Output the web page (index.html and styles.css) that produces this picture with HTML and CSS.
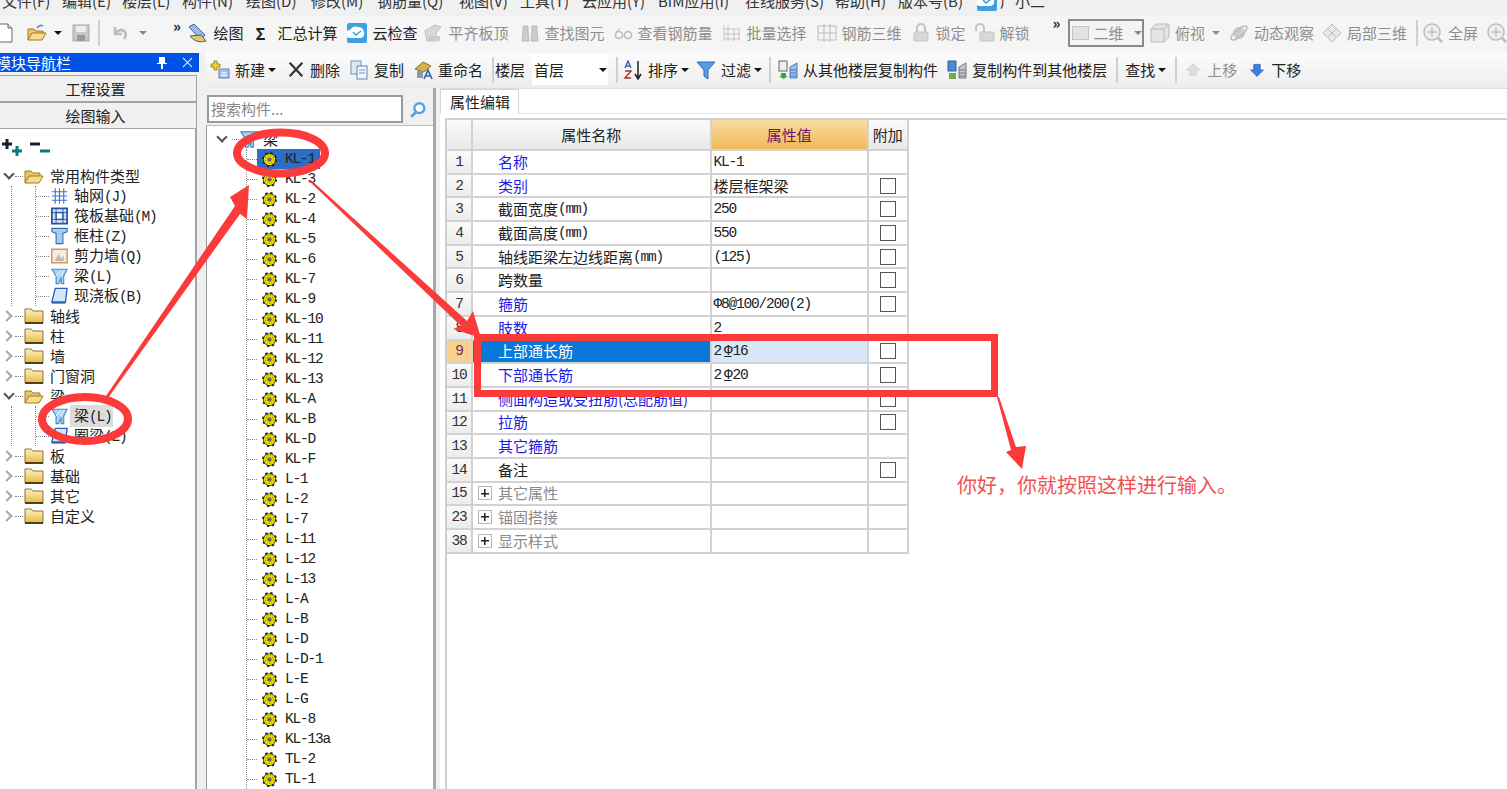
FILE: index.html
```html
<!DOCTYPE html>
<html lang="zh-CN">
<head>
    <meta charset="UTF-8">
    <meta name="viewport" content="width=device-width, initial-scale=1.0">
    <title>属性编辑</title>
    <link rel="stylesheet" href="styles.css">
</head>
<body>
    <svg class="defs" width="0" height="0">
        <linearGradient id="g-folder" x1="0" y1="0" x2="0" y2="1"><stop offset="0" stop-color="#fdf3c4"/><stop offset="1" stop-color="#eab93e"/></linearGradient>
        <symbol id="i-doc" viewBox="0 0 20 20"><path d="M3 1h10l4 4v14H3z" fill="#fff" stroke="#667"/><path d="M13 1v4h4" fill="#dde" stroke="#667"/></symbol>
        <symbol id="i-open" viewBox="0 0 20 20"><path d="M1 17V5h6l2 2h7v4H6z" fill="#e8c46a" stroke="#a07a20"/><path d="M1 17l4-7h14l-4 7z" fill="#f6dc8c" stroke="#a07a20"/></symbol>
        <symbol id="i-open-arrow" viewBox="0 0 20 20"><path d="M1 17V6h6l2 2h7v3H6z" fill="#e8c46a" stroke="#a07a20"/><path d="M1 17l4-7h14l-4 7z" fill="#f6dc8c" stroke="#a07a20"/><path d="M10 5q3-4 6-2" fill="none" stroke="#5a8fd0" stroke-width="1.6"/></symbol>
        <symbol id="i-save" viewBox="0 0 20 20"><rect x="2" y="2" width="16" height="16" fill="#c8c8c8" stroke="#aaa"/><rect x="5" y="3" width="10" height="6" fill="#eee"/><rect x="6" y="12" width="8" height="6" fill="#999"/></symbol>
        <symbol id="i-undo" viewBox="0 0 20 20"><path d="M5 4v7h7M5 11q5-7 10-2 2 3-1 7" fill="none" stroke="#bbb" stroke-width="2.6"/></symbol>
        <symbol id="i-draw" viewBox="0 0 20 20"><path d="M1 4l5-3 11 11-4 5z" fill="#9db9e4" stroke="#3a5f9a"/><path d="M2 13q6 8 16 5l-5-6z" fill="#e8c75c" stroke="#3a5f9a"/></symbol>
        <symbol id="i-cloud" viewBox="0 0 20 20"><rect x="0" y="0" width="20" height="20" rx="2" fill="#3da0e0"/><path d="M3 15a4 4 0 0 1 0-8q3-5 8-3 5 0 6 5 1 5-3 6z" fill="#fff"/><path d="M6 9l3 3 5-4" fill="none" stroke="#3da0e0" stroke-width="1.6"/></symbol>
        <symbol id="i-align" viewBox="0 0 20 20"><path d="M1 8l10-6 6 2-5 6v8H3z" fill="#d8d8d8" stroke="#bbb"/><path d="M4 13h12v5H4z" fill="#ccc"/></symbol>
        <symbol id="i-binoc" viewBox="0 0 20 20"><path d="M3 3h5v5l1 10H2l1-10zM12 3h5v5l1 10h-7l1-10z" fill="#ccc" stroke="#bbb"/></symbol>
        <symbol id="i-glass" viewBox="0 0 20 20"><circle cx="6" cy="12" r="3.5" fill="none" stroke="#bbb" stroke-width="1.6"/><circle cx="15" cy="12" r="3.5" fill="none" stroke="#bbb" stroke-width="1.6"/><path d="M3 9l4-4" stroke="#bbb"/></symbol>
        <symbol id="i-batch" viewBox="0 0 20 20"><path d="M2 2v16M6 2v16M2 6h16M2 11h16M2 16h16M12 6v12M17 6v12" stroke="#c4c4c4" fill="none"/></symbol>
        <symbol id="i-grid3d" viewBox="0 0 20 20"><path d="M1 3h18v14H1zM7 1v18M13 1v18M1 10h18" stroke="#bbb" fill="none"/></symbol>
        <symbol id="i-lock" viewBox="0 0 20 20"><path d="M6 9V5a4 4 0 0 1 8 0v4" fill="none" stroke="#c4c4c4" stroke-width="2"/><rect x="3" y="9" width="14" height="9" rx="1" fill="#d8d8d8" stroke="#c4c4c4"/></symbol>
        <symbol id="i-unlock" viewBox="0 0 20 20"><path d="M1 8V5a4 4 0 0 1 8 0v4" fill="none" stroke="#c4c4c4" stroke-width="2"/><rect x="5" y="9" width="14" height="9" rx="1" fill="#d8d8d8" stroke="#c4c4c4"/></symbol>
        <symbol id="i-cube" viewBox="0 0 20 20"><path d="M1 6l5-5h13v13l-5 5H1z" fill="#e4e4e4" stroke="#bbb"/><path d="M1 6h13v13M14 6l5-5" fill="none" stroke="#bbb"/></symbol>
        <symbol id="i-orbit" viewBox="0 0 20 20"><circle cx="10" cy="10" r="6" fill="#ccc"/><ellipse cx="10" cy="10" rx="10" ry="3.5" transform="rotate(-40 10 10)" fill="none" stroke="#bbb" stroke-width="1.5"/></symbol>
        <symbol id="i-part" viewBox="0 0 20 20"><path d="M10 1l9 9-9 9-9-9z" fill="#e8e8e8" stroke="#bbb"/><path d="M5 5l9 9M15 5l-9 9" stroke="#bbb"/></symbol>
        <symbol id="i-zoom" viewBox="0 0 20 20"><circle cx="9" cy="9" r="8" fill="#eee" stroke="#bbb" stroke-width="1.5"/><path d="M9 4v10M4 9h10" stroke="#aaa"/><path d="M15 15l4 4" stroke="#bbb" stroke-width="2.5"/></symbol>
        <symbol id="i-new" viewBox="0 0 20 20"><path d="M4 1h3v3h3v3H7v3H4V7H1V4h3z" fill="#f2d23c" stroke="#a08a20"/><rect x="9" y="9" width="10" height="9" fill="#a9c2e6" stroke="#5f82b6"/><path d="M11 13h6M11 15.500h6" stroke="#fff"/></symbol>
        <symbol id="i-del" viewBox="0 0 20 20"><path d="M3 2l14 15M17 2L3 17" stroke="#333" stroke-width="2.4"/></symbol>
        <symbol id="i-copy" viewBox="0 0 20 20"><rect x="2" y="1" width="10" height="13" fill="#dfe8f5" stroke="#6f8fbd"/><rect x="8" y="6" width="10" height="13" fill="#f4f8fd" stroke="#5f82b6"/><path d="M10 10h6M10 13h6" stroke="#6f8fbd"/></symbol>
        <symbol id="i-rename" viewBox="0 0 20 20"><path d="M2 9l8-7 8 4-7 6z" fill="#d8b24c" stroke="#8a7020"/><rect x="4" y="11" width="6" height="7" fill="#8a9aa8"/><path d="M11 19l4-9 4 9M12.500 16h5" fill="none" stroke="#2a62b8" stroke-width="1.6"/></symbol>
        <symbol id="i-az" viewBox="0 0 20 20"><path d="M2 8l3-7 3 7M3 6h4" fill="none" stroke="#2f62b5" stroke-width="1.4"/><path d="M2 11h6l-6 7h6" fill="none" stroke="#a83030" stroke-width="1.4"/><path d="M15 1v17M12 14l3 5 3-5" fill="none" stroke="#222" stroke-width="1.5"/></symbol>
        <symbol id="i-funnel" viewBox="0 0 20 20"><path d="M1 2h18l-7 8v9l-4-3v-6z" fill="#5b9be0" stroke="#2a6cb8"/></symbol>
        <symbol id="i-from" viewBox="0 0 20 20"><rect x="1" y="1" width="8" height="10" fill="#eee" stroke="#666"/><path d="M3 13h5v3h2l-4.500 3L1 16h2z" fill="#3ca04a"/><path d="M12 7l7-4v15h-7zM12 10h7M12 13h7M12 16h7" fill="#9fc0e6" stroke="#4f7db5"/></symbol>
        <symbol id="i-to" viewBox="0 0 20 20"><rect x="1" y="1" width="8" height="10" fill="#4f86d6" stroke="#2f5fa5"/><rect x="2" y="13" width="7" height="6" fill="#6cb04a"/><path d="M12 7l7-4v15h-7zM12 10h7M12 13h7M12 16h7" fill="#c4c8cc" stroke="#777"/></symbol>
        <symbol id="i-up" viewBox="0 0 20 20"><path d="M10 2l8 8h-4v7H6v-7H2z" fill="#ddd" stroke="#ccc"/></symbol>
        <symbol id="i-down" viewBox="0 0 20 20"><path d="M10 18l8-8h-4V3H6v7H2z" fill="#3f7fe0" stroke="#2a5fb0"/></symbol>
        <symbol id="i-search" viewBox="0 0 20 20"><circle cx="11.500" cy="8" r="5.500" fill="#fff" stroke="#4fa3e8" stroke-width="2.600"/><path d="M7.500 12.500L2.500 17.500" stroke="#4fa3e8" stroke-width="3.200"/></symbol>
        <symbol id="i-folder" viewBox="0 0 20 20"><path d="M1 17V3h6l2 2h10v12z" fill="url(#g-folder)" stroke="#8a7434"/><path d="M1 17h18" stroke="#4f421a" stroke-width="2"/></symbol>
        <symbol id="i-axis" viewBox="0 0 20 20"><path d="M1 5h18M1 10h18M1 15h18M5 1v18M10 1v18M15 1v18" stroke="#3f6fd0" stroke-width="1.300"/></symbol>
        <symbol id="i-raft" viewBox="0 0 20 20"><rect x="1" y="1" width="18" height="18" fill="#cfe0f5" stroke="#27559c" stroke-width="2"/><rect x="6" y="6" width="8" height="8" fill="#fff" stroke="#27559c" stroke-width="1.500"/><path d="M1 6h18M1 14h18M6 1v18M14 1v18" stroke="#27559c"/></symbol>
        <symbol id="i-col" viewBox="0 0 20 20"><path d="M1 1h18v4l-5 2v12H6V7L1 5z" fill="#a9cbee" stroke="#2f6fb5" stroke-width="1.300"/></symbol>
        <symbol id="i-wall" viewBox="0 0 20 20"><rect x="1" y="2" width="18" height="16" fill="#f6ead8" stroke="#c98a4a" stroke-width="1.500"/><path d="M5 14l4-6 3 5 3-3v6H5z" fill="#bbb"/></symbol>
        <symbol id="i-beam" viewBox="0 0 20 20"><path d="M1 2h18l-4 8v9h-3v-7l-3 7H6v-9z" fill="#a9d3f2" stroke="#3f8cd0" stroke-width="1.300"/><path d="M12 3l-6 7M16 3l-5 7" stroke="#fff"/></symbol>
        <symbol id="i-slab" viewBox="0 0 20 20"><path d="M5 1h14l-2 16H1z" fill="#d5e6f8" stroke="#2a62c0" stroke-width="1.600"/><path d="M1 17h16v2H1z" fill="#2a62c0"/></symbol>
        <symbol id="i-gear" viewBox="0 0 20 20"><circle cx="10" cy="10" r="8.500" fill="#222" stroke="#222" stroke-width="3" stroke-dasharray="3 3.680"/><circle cx="10" cy="10" r="7.500" fill="#f4e800"/><circle cx="10" cy="10" r="3" fill="#6a6a50"/><circle cx="10" cy="10" r="5.200" fill="none" stroke="#222" stroke-width="1" stroke-dasharray="1.500 2"/></symbol>
    </svg>

    <nav class="menubar">
        <div class="menu-inner">
            <span>文件(F)</span><span>编辑(E)</span><span>楼层(L)</span><span>构件(N)</span><span>绘图(D)</span><span>修改(M)</span><span>钢筋量(Q)</span><span>视图(V)</span><span>工具(T)</span><span>云应用(Y)</span><span>BIM应用(I)</span><span>在线服务(S)</span><span>帮助(H)</span><span>版本号(B)</span>
            <span class="menu-user"><svg class="ico"><use href="#i-cloud"/></svg>广小二</span>
        </div>
    </nav>

    <header class="toolbar">
        <div class="tb-group tb-file">
            <svg class="ico doc"><use href="#i-doc"/></svg>
            <svg class="ico open"><use href="#i-open-arrow"/></svg>
            <i class="caret"></i>
            <svg class="ico save"><use href="#i-save"/></svg>
            <i class="sep"></i>
            <svg class="ico undo"><use href="#i-undo"/></svg>
            <i class="caret off"></i>
            <b class="more">»</b>
        </div>
        <div class="tb-item g7"><svg class="ico"><use href="#i-draw"/></svg>绘图</div>
        <div class="tb-item g12 sigma"><b>Σ</b>汇总计算</div>
        <div class="tb-item g10"><svg class="ico"><use href="#i-cloud"/></svg>云检查</div>
        <div class="tb-item g6 off"><svg class="ico"><use href="#i-align"/></svg>平齐板顶</div>
        <div class="tb-item g11 off"><svg class="ico"><use href="#i-binoc"/></svg>查找图元</div>
        <div class="tb-item g8 off"><svg class="ico"><use href="#i-glass"/></svg>查看钢筋量</div>
        <div class="tb-item off"><svg class="ico"><use href="#i-batch"/></svg>批量选择</div>
        <div class="tb-item g10 off"><svg class="ico"><use href="#i-grid3d"/></svg>钢筋三维</div>
        <div class="tb-item off"><svg class="ico"><use href="#i-lock"/></svg>锁定</div>
        <div class="tb-item off"><svg class="ico"><use href="#i-unlock"/></svg>解锁</div>
        <b class="more more-2">»</b>
        <div class="view-select"><i class="swatch"></i>二维<i class="caret off"></i></div>
        <div class="tb-item g6 off tight"><svg class="ico"><use href="#i-cube"/></svg>俯视<i class="caret off"></i></div>
        <div class="tb-item off"><svg class="ico"><use href="#i-orbit"/></svg>动态观察</div>
        <div class="tb-item g8 off"><svg class="ico"><use href="#i-part"/></svg>局部三维</div>
        <i class="sep"></i>
        <div class="tb-item g5 off"><svg class="ico"><use href="#i-zoom"/></svg>全屏</div>
        <div class="tb-item off"><svg class="ico"><use href="#i-zoom"/></svg></div>
    </header>

    <div class="workspace">
        <aside class="nav">
            <div class="nav-title">
                <span>模块导航栏</span>
                <svg class="nav-pin" viewBox="0 0 12 14"><path d="M3 1h6v6h2v1H7v5H5V8H1V7h2z" fill="#fff"/></svg>
                <svg class="nav-close" viewBox="0 0 12 12"><path d="M1 1l10 10M11 1L1 11" stroke="#dfe8ff" stroke-width="1.200"/></svg>
            </div>
            <div class="nav-btns">
                <button class="nav-btn">工程设置</button>
                <button class="nav-btn">绘图输入</button>
            </div>
            <div class="nav-body">
                <div class="nav-tools">
                    <svg viewBox="0 0 22 18" width="22" height="18"><path d="M5 0v10M0 5h10" stroke="#123" stroke-width="3"/><path d="M15 7v10M10 12h10" stroke="#0a7a78" stroke-width="3"/></svg>
                    <svg viewBox="0 0 22 18" width="22" height="18"><path d="M0 5h10" stroke="#123" stroke-width="3"/><path d="M10 12h10" stroke="#0a7a78" stroke-width="3"/></svg>
                </div>
                <div class="tree-row"><i class="chev down"></i><i class="dots"></i><svg class="ico"><use href="#i-open"/></svg>常用构件类型</div>
                <div class="branch">
                    <div class="kids">
                        <div class="kid"><i class="twig"></i><svg class="ico small"><use href="#i-axis"/></svg><span>轴网<span class="lat">(J)</span></span></div>
                        <div class="kid"><i class="twig"></i><svg class="ico small"><use href="#i-raft"/></svg><span>筏板基础<span class="lat">(M)</span></span></div>
                        <div class="kid"><i class="twig"></i><svg class="ico small"><use href="#i-col"/></svg><span>框柱<span class="lat">(Z)</span></span></div>
                        <div class="kid"><i class="twig"></i><svg class="ico small"><use href="#i-wall"/></svg><span>剪力墙<span class="lat">(Q)</span></span></div>
                        <div class="kid"><i class="twig"></i><svg class="ico small"><use href="#i-beam"/></svg><span>梁<span class="lat">(L)</span></span></div>
                        <div class="kid"><i class="twig"></i><svg class="ico small"><use href="#i-slab"/></svg><span>现浇板<span class="lat">(B)</span></span></div>
                    </div>
                </div>
                <div class="tree-row"><i class="chev"></i><i class="dots"></i><svg class="ico"><use href="#i-folder"/></svg>轴线</div>
                <div class="tree-row"><i class="chev"></i><i class="dots"></i><svg class="ico"><use href="#i-folder"/></svg>柱</div>
                <div class="tree-row"><i class="chev"></i><i class="dots"></i><svg class="ico"><use href="#i-folder"/></svg>墙</div>
                <div class="tree-row"><i class="chev"></i><i class="dots"></i><svg class="ico"><use href="#i-folder"/></svg>门窗洞</div>
                <div class="tree-row"><i class="chev down"></i><i class="dots"></i><svg class="ico"><use href="#i-open"/></svg>梁</div>
                <div class="branch">
                    <div class="kids">
                        <div class="kid"><i class="twig"></i><svg class="ico small"><use href="#i-beam"/></svg><span class="picked">梁<span class="lat">(L)</span></span></div>
                        <div class="kid"><i class="twig"></i><svg class="ico small"><use href="#i-slab"/></svg><span>圈梁<span class="lat">(E)</span></span></div>
                    </div>
                </div>
                <div class="tree-row"><i class="chev"></i><i class="dots"></i><svg class="ico"><use href="#i-folder"/></svg>板</div>
                <div class="tree-row"><i class="chev"></i><i class="dots"></i><svg class="ico"><use href="#i-folder"/></svg>基础</div>
                <div class="tree-row"><i class="chev"></i><i class="dots"></i><svg class="ico"><use href="#i-folder"/></svg>其它</div>
                <div class="tree-row"><i class="chev"></i><i class="dots"></i><svg class="ico"><use href="#i-folder"/></svg>自定义</div>
            </div>
        </aside>

        <main class="work">
            <div class="subtoolbar">
                <div class="st-item"><svg class="ico"><use href="#i-new"/></svg>新建<i class="caret"></i></div>
                <div class="st-item s-del"><svg class="ico del"><use href="#i-del"/></svg>删除</div>
                <div class="st-item"><svg class="ico"><use href="#i-copy"/></svg>复制</div>
                <div class="st-item"><svg class="ico"><use href="#i-rename"/></svg>重命名</div>
                <i class="sep"></i>
                <span>楼层</span>
                <div class="floor-select">首层<i class="caret"></i></div>
                <i class="sep"></i>
                <div class="st-item s-sort"><svg class="ico"><use href="#i-az"/></svg>排序<i class="caret"></i></div>
                <div class="st-item s-filter"><svg class="ico"><use href="#i-funnel"/></svg>过滤<i class="caret"></i></div>
                <i class="sep"></i>
                <div class="st-item s-from"><svg class="ico"><use href="#i-from"/></svg>从其他楼层复制构件</div>
                <div class="st-item"><svg class="ico"><use href="#i-to"/></svg>复制构件到其他楼层</div>
                <i class="sep"></i>
                <div class="st-item s-find">查找<i class="caret"></i></div>
                <i class="sep"></i>
                <div class="st-item off arrow s-up"><svg class="ico"><use href="#i-up"/></svg>上移</div>
                <div class="st-item arrow s-down"><svg class="ico"><use href="#i-down"/></svg>下移</div>
            </div>

            <div class="panes">
                <section class="list">
                    <div class="search">
                        <div class="search-box">搜索构件...</div>
                        <svg class="search-ico"><use href="#i-search"/></svg>
                    </div>
                    <div class="list-tree">
                        <div class="list-root"><i class="chev down"></i><i class="dots"></i><svg class="ico"><use href="#i-beam"/></svg>梁</div>
                        <div class="leaves">
                            <div class="leaf-row"><i class="twig"></i><span class="leaf selected"><svg class="gear"><use href="#i-gear"/></svg>KL-1</span></div>
                            <div class="leaf-row"><i class="twig"></i><span class="leaf"><svg class="gear"><use href="#i-gear"/></svg>KL-3</span></div>
                            <div class="leaf-row"><i class="twig"></i><span class="leaf"><svg class="gear"><use href="#i-gear"/></svg>KL-2</span></div>
                            <div class="leaf-row"><i class="twig"></i><span class="leaf"><svg class="gear"><use href="#i-gear"/></svg>KL-4</span></div>
                            <div class="leaf-row"><i class="twig"></i><span class="leaf"><svg class="gear"><use href="#i-gear"/></svg>KL-5</span></div>
                            <div class="leaf-row"><i class="twig"></i><span class="leaf"><svg class="gear"><use href="#i-gear"/></svg>KL-6</span></div>
                            <div class="leaf-row"><i class="twig"></i><span class="leaf"><svg class="gear"><use href="#i-gear"/></svg>KL-7</span></div>
                            <div class="leaf-row"><i class="twig"></i><span class="leaf"><svg class="gear"><use href="#i-gear"/></svg>KL-9</span></div>
                            <div class="leaf-row"><i class="twig"></i><span class="leaf"><svg class="gear"><use href="#i-gear"/></svg>KL-10</span></div>
                            <div class="leaf-row"><i class="twig"></i><span class="leaf"><svg class="gear"><use href="#i-gear"/></svg>KL-11</span></div>
                            <div class="leaf-row"><i class="twig"></i><span class="leaf"><svg class="gear"><use href="#i-gear"/></svg>KL-12</span></div>
                            <div class="leaf-row"><i class="twig"></i><span class="leaf"><svg class="gear"><use href="#i-gear"/></svg>KL-13</span></div>
                            <div class="leaf-row"><i class="twig"></i><span class="leaf"><svg class="gear"><use href="#i-gear"/></svg>KL-A</span></div>
                            <div class="leaf-row"><i class="twig"></i><span class="leaf"><svg class="gear"><use href="#i-gear"/></svg>KL-B</span></div>
                            <div class="leaf-row"><i class="twig"></i><span class="leaf"><svg class="gear"><use href="#i-gear"/></svg>KL-D</span></div>
                            <div class="leaf-row"><i class="twig"></i><span class="leaf"><svg class="gear"><use href="#i-gear"/></svg>KL-F</span></div>
                            <div class="leaf-row"><i class="twig"></i><span class="leaf"><svg class="gear"><use href="#i-gear"/></svg>L-1</span></div>
                            <div class="leaf-row"><i class="twig"></i><span class="leaf"><svg class="gear"><use href="#i-gear"/></svg>L-2</span></div>
                            <div class="leaf-row"><i class="twig"></i><span class="leaf"><svg class="gear"><use href="#i-gear"/></svg>L-7</span></div>
                            <div class="leaf-row"><i class="twig"></i><span class="leaf"><svg class="gear"><use href="#i-gear"/></svg>L-11</span></div>
                            <div class="leaf-row"><i class="twig"></i><span class="leaf"><svg class="gear"><use href="#i-gear"/></svg>L-12</span></div>
                            <div class="leaf-row"><i class="twig"></i><span class="leaf"><svg class="gear"><use href="#i-gear"/></svg>L-13</span></div>
                            <div class="leaf-row"><i class="twig"></i><span class="leaf"><svg class="gear"><use href="#i-gear"/></svg>L-A</span></div>
                            <div class="leaf-row"><i class="twig"></i><span class="leaf"><svg class="gear"><use href="#i-gear"/></svg>L-B</span></div>
                            <div class="leaf-row"><i class="twig"></i><span class="leaf"><svg class="gear"><use href="#i-gear"/></svg>L-D</span></div>
                            <div class="leaf-row"><i class="twig"></i><span class="leaf"><svg class="gear"><use href="#i-gear"/></svg>L-D-1</span></div>
                            <div class="leaf-row"><i class="twig"></i><span class="leaf"><svg class="gear"><use href="#i-gear"/></svg>L-E</span></div>
                            <div class="leaf-row"><i class="twig"></i><span class="leaf"><svg class="gear"><use href="#i-gear"/></svg>L-G</span></div>
                            <div class="leaf-row"><i class="twig"></i><span class="leaf"><svg class="gear"><use href="#i-gear"/></svg>KL-8</span></div>
                            <div class="leaf-row"><i class="twig"></i><span class="leaf"><svg class="gear"><use href="#i-gear"/></svg>KL-13a</span></div>
                            <div class="leaf-row"><i class="twig"></i><span class="leaf"><svg class="gear"><use href="#i-gear"/></svg>TL-2</span></div>
                            <div class="leaf-row"><i class="twig"></i><span class="leaf"><svg class="gear"><use href="#i-gear"/></svg>TL-1</span></div>
                        </div>
                    </div>
                </section>

                <section class="props">
                    <div class="tabs"><div class="tab">属性编辑</div></div>
                    <div class="frame">
                        <div class="grid">
                            <div class="cell head"></div><div class="cell head center">属性名称</div><div class="cell head hot center">属性值</div><div class="cell head center">附加</div>

                            <div class="cell idx">1</div><div class="cell name link">名称</div><div class="cell val lat">KL-1</div><div class="cell"></div>
                            <div class="cell idx">2</div><div class="cell name link">类别</div><div class="cell val">楼层框架梁</div><div class="cell"><i class="check"></i></div>
                            <div class="cell idx">3</div><div class="cell name">截面宽度<span class="lat">(mm)</span></div><div class="cell val lat">250</div><div class="cell"><i class="check"></i></div>
                            <div class="cell idx">4</div><div class="cell name">截面高度<span class="lat">(mm)</span></div><div class="cell val lat">550</div><div class="cell"><i class="check"></i></div>
                            <div class="cell idx">5</div><div class="cell name">轴线距梁左边线距离<span class="lat">(mm)</span></div><div class="cell val lat">(125)</div><div class="cell"><i class="check"></i></div>
                            <div class="cell idx">6</div><div class="cell name">跨数量</div><div class="cell val"></div><div class="cell"><i class="check"></i></div>
                            <div class="cell idx">7</div><div class="cell name link">箍筋</div><div class="cell val lat">Φ8@100/200(2)</div><div class="cell"><i class="check"></i></div>
                            <div class="cell idx">8</div><div class="cell name link">肢数</div><div class="cell val lat">2</div><div class="cell"></div>
                            <div class="cell idx active">9</div><div class="cell name current">上部通长筋</div><div class="cell val lat current-val">2<span class="rebar">Φ</span>16</div><div class="cell"><i class="check"></i></div>
                            <div class="cell idx">10</div><div class="cell name link">下部通长筋</div><div class="cell val lat">2<span class="rebar">Φ</span>20</div><div class="cell"><i class="check"></i></div>
                            <div class="cell idx">11</div><div class="cell name link">侧面构造或受扭筋(总配筋值)</div><div class="cell val"></div><div class="cell"><i class="check"></i></div>
                            <div class="cell idx">12</div><div class="cell name link">拉筋</div><div class="cell val"></div><div class="cell"><i class="check"></i></div>
                            <div class="cell idx">13</div><div class="cell name link">其它箍筋</div><div class="cell val"></div><div class="cell"></div>
                            <div class="cell idx">14</div><div class="cell name">备注</div><div class="cell val"></div><div class="cell"><i class="check"></i></div>
                            <div class="cell idx">15</div><div class="cell name group"><i class="plus"></i>其它属性</div><div class="cell val"></div><div class="cell"></div>
                            <div class="cell idx">23</div><div class="cell name group"><i class="plus"></i>锚固搭接</div><div class="cell val"></div><div class="cell"></div>
                            <div class="cell idx">38</div><div class="cell name group"><i class="plus"></i>显示样式</div><div class="cell val"></div><div class="cell"></div>
                        </div>
                    </div>
                </section>
            </div>
        </main>
    </div>

    <!-- hand drawn red notes on top of the screenshot -->
    <svg class="notes" viewBox="0 0 1507 789">
        <g fill="none" stroke="#fb3a3a">
            <ellipse cx="281" cy="153" rx="44" ry="20.500" stroke-width="8"/>
            <ellipse cx="85" cy="419" rx="43" ry="22" stroke-width="8"/>
            <rect x="477.500" y="337.500" width="517" height="56" stroke-width="7"/>
        </g>
        <g fill="#fb3a3a">
            <polygon points="106,396 108,398 240,214 247,219 249,185 230,197 235,206"/>
            <polygon points="309,181 311,180 467,321 473,311 481,338 453,329 461,326"/>
            <polygon points="997,397 999,397 1016,447 1026,446 1022,469 1006,452 1011,450"/>
        </g>
    </svg>
    <p class="note-text">你好，你就按照这样进行输入。</p>
</body>
</html>
```

FILE: styles.css
```css
* {
    box-sizing: border-box;
}
body {
    margin: 0;
    width: 1507px;
    height: 789px;
    overflow: hidden;
    position: relative;
    background: #f0f0f0;
    color: #222;
    font-family: "Noto Sans CJK SC", "Liberation Sans", sans-serif;
    font-size: 15px;
    line-height: 20px;
}
i {
    display: block;
    flex: none;
}
.defs {
    position: absolute;
}
.lat {
    font-family: "Liberation Mono", "Noto Sans CJK SC", monospace;
    font-size: 14.500px;
    letter-spacing: -1.200px;
}
.ico {
    display: block;
    flex: none;
    width: 20px;
    height: 20px;
}
.ico.small {
    width: 17px;
    height: 18px;
}

/* menu */
.menubar {
    height: 16px;
    overflow: hidden;
    background: #f0f0f0;
}
.menu-inner {
    display: grid;
    grid-template-columns: 60px 60px 60px 64px 65px 66px 82px 61px 62px 76px 87px 90px 63px 79px auto;
    margin-top: -9px;
    padding-left: 2px;
    color: #333;
    white-space: nowrap;
}
.menu-user {
    display: flex;
    gap: 3px;
}

/* top toolbar */
.toolbar {
    height: 37px;
    display: flex;
    align-items: center;
    padding-bottom: 3px;
    background: #f5f5f5;
    white-space: nowrap;
}
.tb-group {
    display: flex;
    align-items: center;
    width: 183px;
    height: 34px;
}
.tb-file .doc {
    margin-left: -5px;
}
.tb-file .open {
    margin-left: 12px;
}
.tb-file .caret {
    margin-left: 7px;
}
.tb-file .save {
    margin-left: 9px;
}
.tb-file .sep {
    margin: 0 10px 0 7px;
}
.tb-file .caret.off {
    margin-left: 9px;
}
.more {
    font-size: 15px;
    line-height: 14px;
    font-weight: 700;
    align-self: flex-start;
    margin: 3px 0 0 26px;
    color: #222;
}
.more-2 {
    margin: 0 0 0 23px;
}
.tb-item {
    display: flex;
    align-items: center;
    gap: 5px;
    margin-left: 9px;
}
.tb-item.g5 {
    margin-left: 5px;
}
.tb-item.g6 {
    margin-left: 6px;
}
.tb-item.g7 {
    margin-left: 7px;
}
.tb-item.g8 {
    margin-left: 8px;
}
.tb-item.g10 {
    margin-left: 10px;
}
.tb-item.g11 {
    margin-left: 11px;
}
.tb-item.g12 {
    margin-left: 12px;
}
.tb-item.sigma {
    gap: 8px;
}
.sigma b {
    font-size: 16px;
    width: 14px;
}
.off {
    color: #8e8e8e;
}
.sep {
    width: 2px;
    height: 26px;
    background: #cfcfcf;
}
.toolbar > .sep {
    margin-left: 9px;
}
.caret {
    width: 0;
    height: 0;
    border-left: 4px solid transparent;
    border-right: 4px solid transparent;
    border-top: 4px solid #111;
}
.caret.off {
    border-top-color: #888;
}
.view-select {
    display: flex;
    align-items: center;
    width: 77px;
    height: 28px;
    margin-left: 7px;
    padding-left: 2px;
    border: 2px solid #8a8a8a;
    background: #f4f4f4;
    color: #8e8e8e;
}
.swatch {
    width: 17px;
    height: 14px;
    margin-right: 5px;
    background: #e2e2e2;
    border: 1px solid #c4c4c4;
}
.view-select .caret {
    margin-left: 10px;
}
.tb-item.tight .caret {
    margin-left: 2px;
}

/* workspace */
.workspace {
    display: flex;
    height: 736px;
}
.nav {
    width: 199px;
    flex: none;
    overflow: hidden;
}
.nav-title {
    height: 19px;
    display: flex;
    align-items: center;
    background: #0052e4;
    color: #fff;
}
.nav-title span {
    margin-left: -4px;
    flex: 1;
}
.nav-pin {
    width: 12px;
    height: 14px;
    margin-right: 14px;
}
.nav-close {
    width: 11px;
    height: 11px;
    margin-right: 6px;
}
.nav-btns {
    width: 197px;
    padding-top: 3px;
    overflow: hidden;
}
.nav-btn {
    display: block;
    width: 203px;
    height: 27px;
    margin-left: -6px;
    padding: 0;
    border: 1px solid #a4a4a4;
    background: #f0f0f0;
    color: #222;
    font: inherit;
}
.nav-body {
    width: 197px;
    height: 661px;
    background: #fff;
    border-right: 2px solid #a4a4a4;
}
.nav-tools {
    height: 37px;
    display: flex;
    gap: 6px;
    padding: 10px 0 0 2px;
}
.tree-row {
    height: 20px;
    display: flex;
    align-items: center;
    padding-left: 4px;
    white-space: nowrap;
}
.tree-row .ico {
    margin-right: 6px;
}
.chev {
    width: 8px;
    height: 8px;
    margin: 0 0 0 -1px;
    border-top: 2px solid #a8a8a8;
    border-right: 2px solid #a8a8a8;
    transform: rotate(45deg);
}
.chev.down {
    margin-left: 1px;
    margin-top: -4px;
    border-color: #555;
    transform: rotate(135deg);
}
.chev.down + .dots {
    margin-left: 2px;
}
.dots {
    width: 8px;
    margin-left: 4px;
    margin-right: 1px;
    border-top: 1px dotted #888;
}
.branch {
    margin-left: 11px;
    border-left: 1px dotted #888;
    padding-left: 23px;
}
.kids {
    border-left: 1px dotted #888;
}
.kid {
    height: 20px;
    display: flex;
    align-items: center;
    white-space: nowrap;
}
.twig {
    width: 13px;
    border-top: 1px dotted #888;
}
.kid .ico {
    margin: 0 6px 0 2px;
}
.picked {
    background: #dcdcdc;
    padding: 0 1px 0 4px;
    margin-left: -4px;
}

/* sub toolbar */
.work {
    flex: 1;
    min-width: 0;
    padding-left: 7px;
}
.subtoolbar {
    height: 35px;
    display: flex;
    align-items: center;
    padding: 0 0 2px 4px;
    background: linear-gradient(#fcfcfc, #ededed);
    white-space: nowrap;
}
.st-item {
    display: flex;
    align-items: center;
    gap: 5px;
    margin-right: 9px;
}
.st-item .caret {
    margin-left: -2px;
}
.st-item .del {
    width: 18px;
    height: 18px;
}
.st-item.s-del {
    margin-left: 2px;
}
.st-item.s-sort {
    margin-left: 2px;
}
.st-item.s-filter {
    margin-left: -2px;
    margin-right: 7px;
}
.st-item.s-from {
    margin-left: 4px;
}
.st-item.s-find {
    margin-left: 4px;
}
.st-item.s-up {
    margin-left: 5px;
}
.st-item.s-down {
    margin-left: 4px;
}
.st-item.arrow {
    gap: 6px;
    margin-right: 8px;
}
.st-item.arrow .ico {
    width: 16px;
    height: 16px;
}
.subtoolbar > .sep {
    margin-right: 3px;
}
.subtoolbar > .st-item + .sep + span {
    margin-left: -2px;
}
.floor-select {
    display: flex;
    align-items: center;
    justify-content: space-between;
    width: 76px;
    height: 30px;
    margin: 0 8px 0 7px;
    padding: 0 1px 0 2px;
    background: #fff;
}

/* component list */
.panes {
    display: flex;
    height: 701px;
}
.list {
    width: 230px;
    flex: none;
    border-right: 3px solid #a8a8a8;
}
.search {
    height: 37px;
    display: flex;
    align-items: flex-start;
    padding: 7px 0 0 1px;
}
.search-box {
    width: 196px;
    height: 28px;
    padding-left: 2px;
    border: 2px solid #9a9a9a;
    background: #fff;
    color: #888;
    line-height: 24px;
}
.search-ico {
    width: 18px;
    height: 18px;
    margin: 6px 0 0 6px;
}
.list-tree {
    height: 664px;
    padding-top: 3px;
    background: #fff;
    border-left: 1px solid #9a9a9a;
    border-top: 1px solid #bbb;
    overflow: hidden;
}
.list-root {
    height: 20px;
    display: flex;
    align-items: center;
    padding-left: 10px;
}
.list-root .chev + .dots {
    margin-left: 6px;
    width: 7px;
}
.list-root .ico {
    width: 18px;
    height: 18px;
    margin-right: 5px;
}
.leaves {
    margin-left: 39px;
    border-left: 1px dotted #888;
}
.leaf-row {
    height: 20px;
    display: flex;
    align-items: center;
}
.leaf-row .twig {
    width: 10px;
}
.leaf {
    height: 20px;
    display: flex;
    align-items: center;
    gap: 8px;
    padding: 0 5px;
    font-family: "Liberation Mono", monospace;
    font-size: 14.500px;
    letter-spacing: -1.200px;
}
.leaf.selected {
    background: #2e6dc6;
}
.gear {
    width: 15px;
    height: 15px;
}

/* property table */
.props {
    flex: 1;
    min-width: 0;
    margin-left: 4px;
    background: #fff;
    border-top: 1px solid #ddd;
}
.tabs {
    height: 25px;
    border-bottom: 1px solid #e4e4e4;
}
.tab {
    width: 79px;
    height: 25px;
    padding: 2px 0 0 9px;
    background: #fff;
    border: 1px solid #d4d4d4;
    border-bottom-color: #fff;
}
.frame {
    height: 671px;
    margin: 4px 0 0 5px;
    border-top: 2px solid #cfcfcf;
    border-left: 2px solid #cfcfcf;
}
.grid {
    display: grid;
    grid-template-columns: 26px 238.500px 157.500px 39.500px;
    grid-template-rows: 31px;
    grid-auto-rows: 23.700px;
    width: 461.500px;
}
.cell {
    display: flex;
    align-items: center;
    min-width: 0;
    overflow: hidden;
    white-space: nowrap;
    border-right: 2px solid #d2d2d2;
    border-bottom: 2px solid #d2d2d2;
    background: #fff;
    justify-content: center;
}
.cell.head {
    background: linear-gradient(#fafafa, #e9e9e9);
}
.cell.hot {
    background: linear-gradient(#f9dca6, #f0b855);
    color: #6f1560;
}
.cell.idx {
    background: linear-gradient(#fafafa, #ececec);
    font-family: "Liberation Mono", monospace;
    font-size: 14.500px;
    letter-spacing: -1.200px;
    color: #333;
}
.cell.idx.active {
    background: #fbd28c;
    color: #7a2a55;
}
.cell.name {
    justify-content: flex-start;
    padding-left: 25px;
}
.cell.link {
    color: #1c1ce6;
}
.cell.current {
    background: #0a78d8;
    color: #fff;
}
.cell.val {
    justify-content: flex-start;
    padding-left: 2px;
}
.current-val {
    background: #d6e8f8;
}
.cell.group {
    padding-left: 5px;
    color: #8a8a8a;
}
.plus {
    width: 14px;
    height: 14px;
    margin-right: 6px;
    border: 1px solid #b8b8b8;
    background:
        linear-gradient(#222, #222) center / 8px 1.500px no-repeat,
        linear-gradient(#222, #222) center / 1.500px 8px no-repeat;
}
.check {
    width: 16px;
    height: 16px;
    border: 1.500px solid #555;
    background: #fff;
}
.rebar {
    margin: 0 1px 0 3px;
    text-decoration: underline;
}

/* red notes */
.notes {
    position: absolute;
    left: 0;
    top: 0;
    width: 1507px;
    height: 789px;
    pointer-events: none;
}
.note-text {
    position: absolute;
    left: 957px;
    top: 473px;
    margin: 0;
    color: #f25050;
    font-size: 20px;
    line-height: 24px;
    white-space: nowrap;
}
```
